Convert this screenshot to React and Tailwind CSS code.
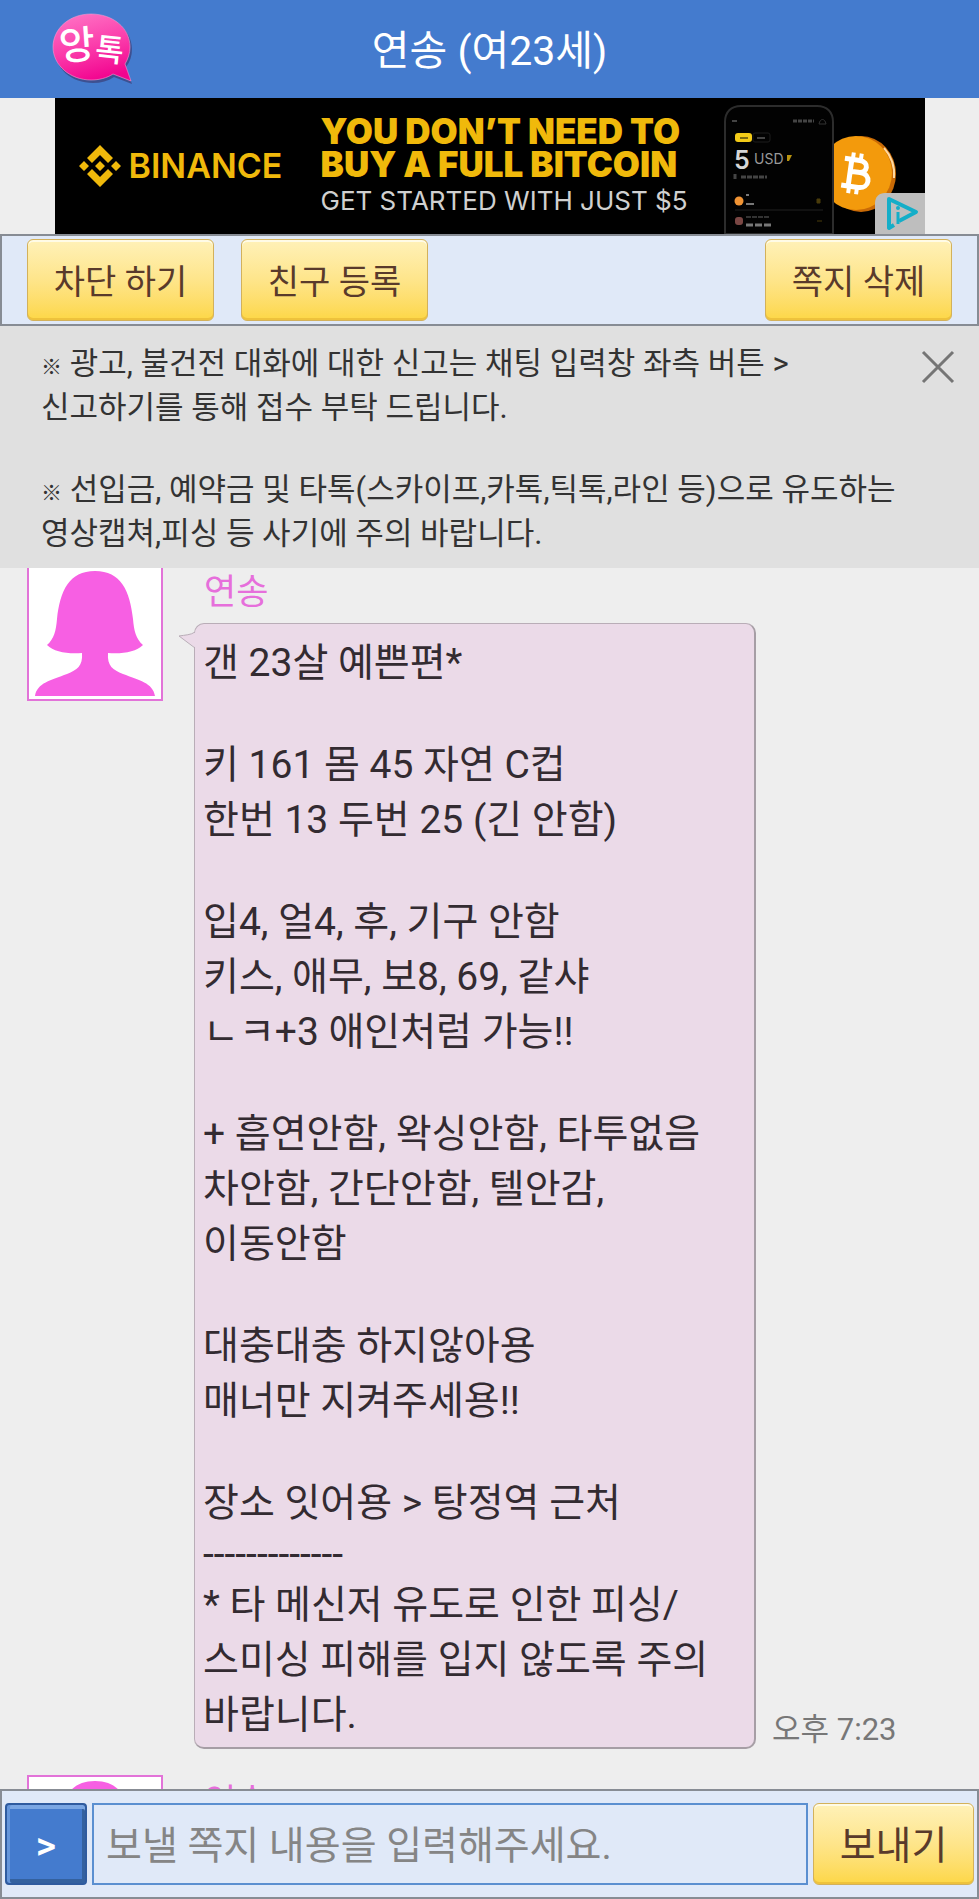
import React, { useState } from 'react';

const NOTICES = [
  ['광고, 불건전 대화에 대한 신고는 채팅 입력창 좌측 버튼 >', '신고하기를 통해 접수 부탁 드립니다.'],
  ['선입금, 예약금 및 타톡(스카이프,카톡,틱톡,라인 등)으로 유도하는', '영상캡쳐,피싱 등 사기에 주의 바랍니다.'],
];

const MESSAGE = `갠 23살 예쁜편*

키 161 몸 45 자연 C컵
한번 13 두번 25 (긴 안함)

입4, 얼4, 후, 기구 안함
키스, 애무, 보8, 69, 같샤
ㄴㅋ+3 애인처럼 가능!!

+ 흡연안함, 왁싱안함, 타투없음
차안함, 간단안함, 텔안감,
이동안함

대충대충 하지않아용
매너만 지켜주세용!!

장소 잇어용 > 탕정역 근처
-------------
* 타 메신저 유도로 인한 피싱/
스미싱 피해를 입지 않도록 주의
바랍니다.`;

function Logo() {
  return (
    <svg width="82" height="72" viewBox="0 0 82 72" role="img" aria-label="앙톡">
      <defs>
        <linearGradient id="logoPink" x1="0.2" y1="0" x2="0.5" y2="1">
          <stop offset="0" stopColor="#ff72c4" />
          <stop offset="0.5" stopColor="#fb3fac" />
          <stop offset="1" stopColor="#f2048f" />
        </linearGradient>
      </defs>
      <path d="M41 3C19 3 3 18 3 37s17 33 38 33c8 0 15-2 21-6l18 7-6-17c4-5 6-11 6-18C80 17 62 3 41 3z" fill="#3b3f78" opacity="0.7" />
      <path d="M39 1C17 1 1 16 1 34s17 33 38 33c8 0 16-2 22-6l18 7-6-17c3-5 5-11 5-17C78 15 61 1 39 1z" fill="url(#logoPink)" stroke="#f59ad0" strokeWidth="0.6" />
      <text x="7" y="46" fontSize="39" fontWeight="500" fill="#fff" transform="rotate(-4 24 32)" className="font-['Noto_Sans_CJK_KR',sans-serif]">앙</text>
      <text x="43" y="48" fontSize="31" fontWeight="500" fill="#fff" transform="rotate(6 56 40)" className="font-['Noto_Sans_CJK_KR',sans-serif]">톡</text>
    </svg>
  );
}

function BinanceMark() {
  return (
    <svg width="42" height="42" viewBox="0 0 42 42" fill="#f0b90b" aria-hidden="true">
      <path d="M21 0l13 13-5 5-8-8-8 8-5-5z" />
      <path d="M21 42L8 29l5-5 8 8 8-8 5 5z" />
      <path d="M21 16l5 5-5 5-5-5zM5 16l5 5-5 5-5-5zM37 16l5 5-5 5-5-5z" />
    </svg>
  );
}

// telefono, moneda y marca de AdChoices del banner
function AdArt() {
  return (
    <svg width="224" height="136" viewBox="0 0 224 136" className="shrink-0" aria-hidden="true">
      <ellipse cx="160" cy="76" rx="35" ry="38" fill="#c96a06" />
      <path d="M183 50c8 9 11 19 10 30" stroke="#ffd9a0" strokeWidth="2" fill="none" />
      <ellipse cx="155" cy="75" rx="36" ry="37" fill="#f39a0c" />
      <g transform="rotate(8 155 75)" fill="none" stroke="#fff" strokeWidth="5">
        <path d="M142 62h15c10 0 10 12 0 12h-8M142 89h17c12 0 12-15 0-15M149 62v27" />
        <path d="M150 55v7M158 55v7M150 89v7M158 89v7" strokeWidth="4" />
      </g>
      <path d="M24 136V24c0-10 6-16 16-16h76c10 0 16 6 16 16v112z" fill="#020202" stroke="#2c2c2c" strokeWidth="2" />
      <path d="M31 23h5" stroke="#444" strokeWidth="2" />
      <path d="M92 23h21" stroke="#444" strokeWidth="3" strokeDasharray="4 1" />
      <path d="M118 26c1-6 6-6 7 0z" fill="none" stroke="#333" />
      <rect x="34" y="35" width="17" height="9" rx="3" fill="#f3cb18" />
      <path d="M39 40h8" stroke="#7c6a10" strokeWidth="2" />
      <rect x="52" y="35" width="17" height="9" rx="2" fill="none" stroke="#1c1c1c" />
      <path d="M56 40h8" stroke="#444" strokeWidth="2" />
      <text x="33" y="71" fontSize="25" fontWeight="600" fill="#d6d6d6" className="font-['Inter',sans-serif]">5</text>
      <text x="53" y="66" fontSize="14" fill="#999" className="font-['Inter',sans-serif]">USD</text>
      <path d="M86 57h5l-3 6h-2z" fill="#b8930f" />
      <path d="M34 76v5M40 79h26" stroke="#444" strokeWidth="3" strokeDasharray="5 1" />
      <circle cx="38" cy="103" r="4.5" fill="#f19434" />
      <path d="M45 97h3M45 106h8" stroke="#777" strokeWidth="2" />
      <path d="M116 101h3v4h-3zM116 123h5" fill="#4b3c0b" stroke="#4b3c0b" />
      <path d="M34 112h88" stroke="#202020" />
      <rect x="34" y="119" width="8" height="8" rx="3" fill="#7a4744" />
      <path d="M45 119h24" stroke="#333" strokeWidth="2" strokeDasharray="5 1" />
      <path d="M45 127h26" stroke="#777" strokeWidth="3" strokeDasharray="7 2" />
      <path d="M174 136v-31c0-6 4-10 10-10h40v41z" fill="#bebebe" />
      <path d="M193 127l-5 3V101l27 13-17 9" fill="none" stroke="#14aec8" strokeWidth="4" strokeLinejoin="round" />
      <path d="M197 114v12" stroke="#14aec8" strokeWidth="3" />
      <circle cx="197" cy="110" r="2" fill="#14aec8" />
    </svg>
  );
}

function Avatar() {
  return (
    <div className="size-[136px] shrink-0 border-2 border-[#e273d8] bg-white">
      <svg viewBox="0 0 132 132" className="size-full" fill="#f75fe3" role="img" aria-label="프로필 사진">
        <path d="M66 4C40 4 31 24 28 52c-1 12-3 20-10 26 7 7 20 9 35 8 1 13-5 17-15 21C22 113 8 116 6 129h120c-2-13-16-16-32-22-10-4-16-8-15-21 15 1 28-1 35-8-7-6-9-14-10-26C101 24 92 4 66 4z" />
      </svg>
    </div>
  );
}

function YellowButton({ children, className, type = 'button' }) {
  return (
    <button
      type={type}
      className={`h-[82px] shrink-0 cursor-pointer rounded-md border border-[#d3b15b] bg-linear-to-b from-[#fff1b8] via-[#fee58a] to-[#fdd745] pt-1 text-[#593a2b] shadow-[inset_0_2px_0_#fffbe6,inset_0_-2px_0_#eec23c] ${className}`}
    >
      {children}
    </button>
  );
}

function Message({ name, text, time }) {
  return (
    <article className="flex items-start">
      <Avatar />
      <div className="ml-[31px] min-w-0 flex-1">
        <h2 className="h-[58px] pt-1 pl-[10px] text-[35px] leading-[48px] text-[#e66fdb]">{name}</h2>
        {text && (
          <div className="flex items-end">
            <div className="relative w-[562px] rounded-[10px] border border-r-2 border-b-2 border-[#b9adb7] border-r-[#a69ea5] border-b-[#a69ea5] bg-[#ebdae8] pt-3 pr-2 pb-1 pl-2 text-[39px] text-[#332b31]">
              <svg width="18" height="18" viewBox="0 0 18 18" className="absolute top-2 -left-[17px]" aria-hidden="true">
                <path d="M18 0C13 3 7 3 1 4l17 12z" fill="#ebdae8" />
                <path d="M17 0C13 3 7 3 1 4l16 12" fill="none" stroke="#b9adb7" />
              </svg>
              {text.split('\n').map((line, i) => (
                <p key={i} className={/^-*$/.test(line) ? 'h-[47px] leading-[47px]' : 'leading-[55px]'}>{line}</p>
              ))}
            </div>
            <time className="ml-4 text-[31px] leading-[38px] whitespace-nowrap text-[#777]">{time}</time>
          </div>
        )}
      </div>
    </article>
  );
}

function App() {
  const [showNotice, setShowNotice] = useState(true);
  const [draft, setDraft] = useState('');

  return (
    <div className="flex h-screen flex-col overflow-hidden bg-[#eeeeee] font-['Roboto','Noto_Sans_CJK_KR',sans-serif]">
      <header className="grid h-[98px] shrink-0 grid-cols-[1fr_auto_1fr] items-center bg-[#447bce] px-[52px]">
        <Logo />
        <h1 className="pt-1 text-[41px] leading-[60px] text-white">연송 (여23세)</h1>
      </header>

      {/* banner */}
      <a href="#binance" className="mx-auto flex h-[136px] w-full max-w-[870px] shrink-0 items-center bg-black pl-6 font-['Inter',sans-serif]">
        <BinanceMark />
        <span className="w-[200px] pl-2 text-[34px] leading-10 font-semibold text-[#f0b90b]">BINANCE</span>
        <span className="flex-1 pt-1 whitespace-nowrap">
          <span className="block text-[35px] leading-[33px] font-black text-[#f0b90b]">YOU DON’T NEED TO</span>
          <span className="block text-[35px] leading-[33px] font-black text-[#f0b90b]">BUY A FULL BITCOIN</span>
          <span className="block text-[26px] leading-10 text-[#d0d0d0]">GET STARTED WITH JUST $5</span>
        </span>
        <AdArt />
      </a>

      <nav className="flex shrink-0 items-center gap-[27px] border-2 border-[#878c94] bg-[#e0e9f8] px-[25px] py-[3px] text-[34px]">
        <YellowButton className="w-[187px]">차단 하기</YellowButton>
        <YellowButton className="w-[187px]">친구 등록</YellowButton>
        <YellowButton className="ml-auto w-[187px]">쪽지 삭제</YellowButton>
      </nav>

      {showNotice && (
        <section className="flex shrink-0 items-start justify-between bg-[#e0e0e0] pt-4 pr-4 pb-3 pl-[41px]">
          <div className="flex flex-col gap-[38px] text-[31px] leading-[44px] text-[#333]">
            {NOTICES.map((lines, i) => (
              <p key={i}>
                <span className="text-[21px] leading-none font-bold">※</span> {lines[0]}
                <br />
                {lines[1]}
              </p>
            ))}
          </div>
          <button type="button" aria-label="닫기" onClick={() => setShowNotice(false)} className="cursor-pointer p-2">
            <svg width="34" height="34" viewBox="0 0 34 34" stroke="#757575" strokeWidth="3">
              <path d="M2 2l30 30M32 2L2 32" />
            </svg>
          </button>
        </section>
      )}

      <main className="min-h-0 flex-1 overflow-hidden px-[27px]">
        <div className="-mt-[3px] flex flex-col gap-[26px]">
          <Message name="연송" text={MESSAGE} time="오후 7:23" />
          <Message name="연송" />
        </div>
      </main>

      <form onSubmit={(e) => e.preventDefault()} className="flex shrink-0 items-center gap-[5px] border-2 border-[#878c94] bg-[#e0e9f8] px-[3px] py-3 text-[39px]">
        <button type="button" aria-label="메뉴 열기" className="size-[82px] shrink-0 cursor-pointer rounded-sm border-2 border-[#2f5b9f] bg-[#447bce] pt-1 text-[39px] font-medium text-white shadow-[inset_3px_0_0_#6595da,inset_0_4px_0_#7aa6e3,inset_-3px_0_0_#34619f,inset_0_-4px_0_#34619f]">
          &gt;
        </button>
        <input
          type="text"
          aria-label="쪽지 내용"
          placeholder="보낼 쪽지 내용을 입력해주세요."
          value={draft}
          onChange={(e) => setDraft(e.target.value)}
          className="h-[82px] min-w-0 flex-1 border-2 border-[#5b8fd0] px-3 pt-1 text-[#333] placeholder:text-[#858585]"
        />
        <YellowButton type="submit" className="w-[161px]">보내기</YellowButton>
      </form>
    </div>
  );
}

export default App;
